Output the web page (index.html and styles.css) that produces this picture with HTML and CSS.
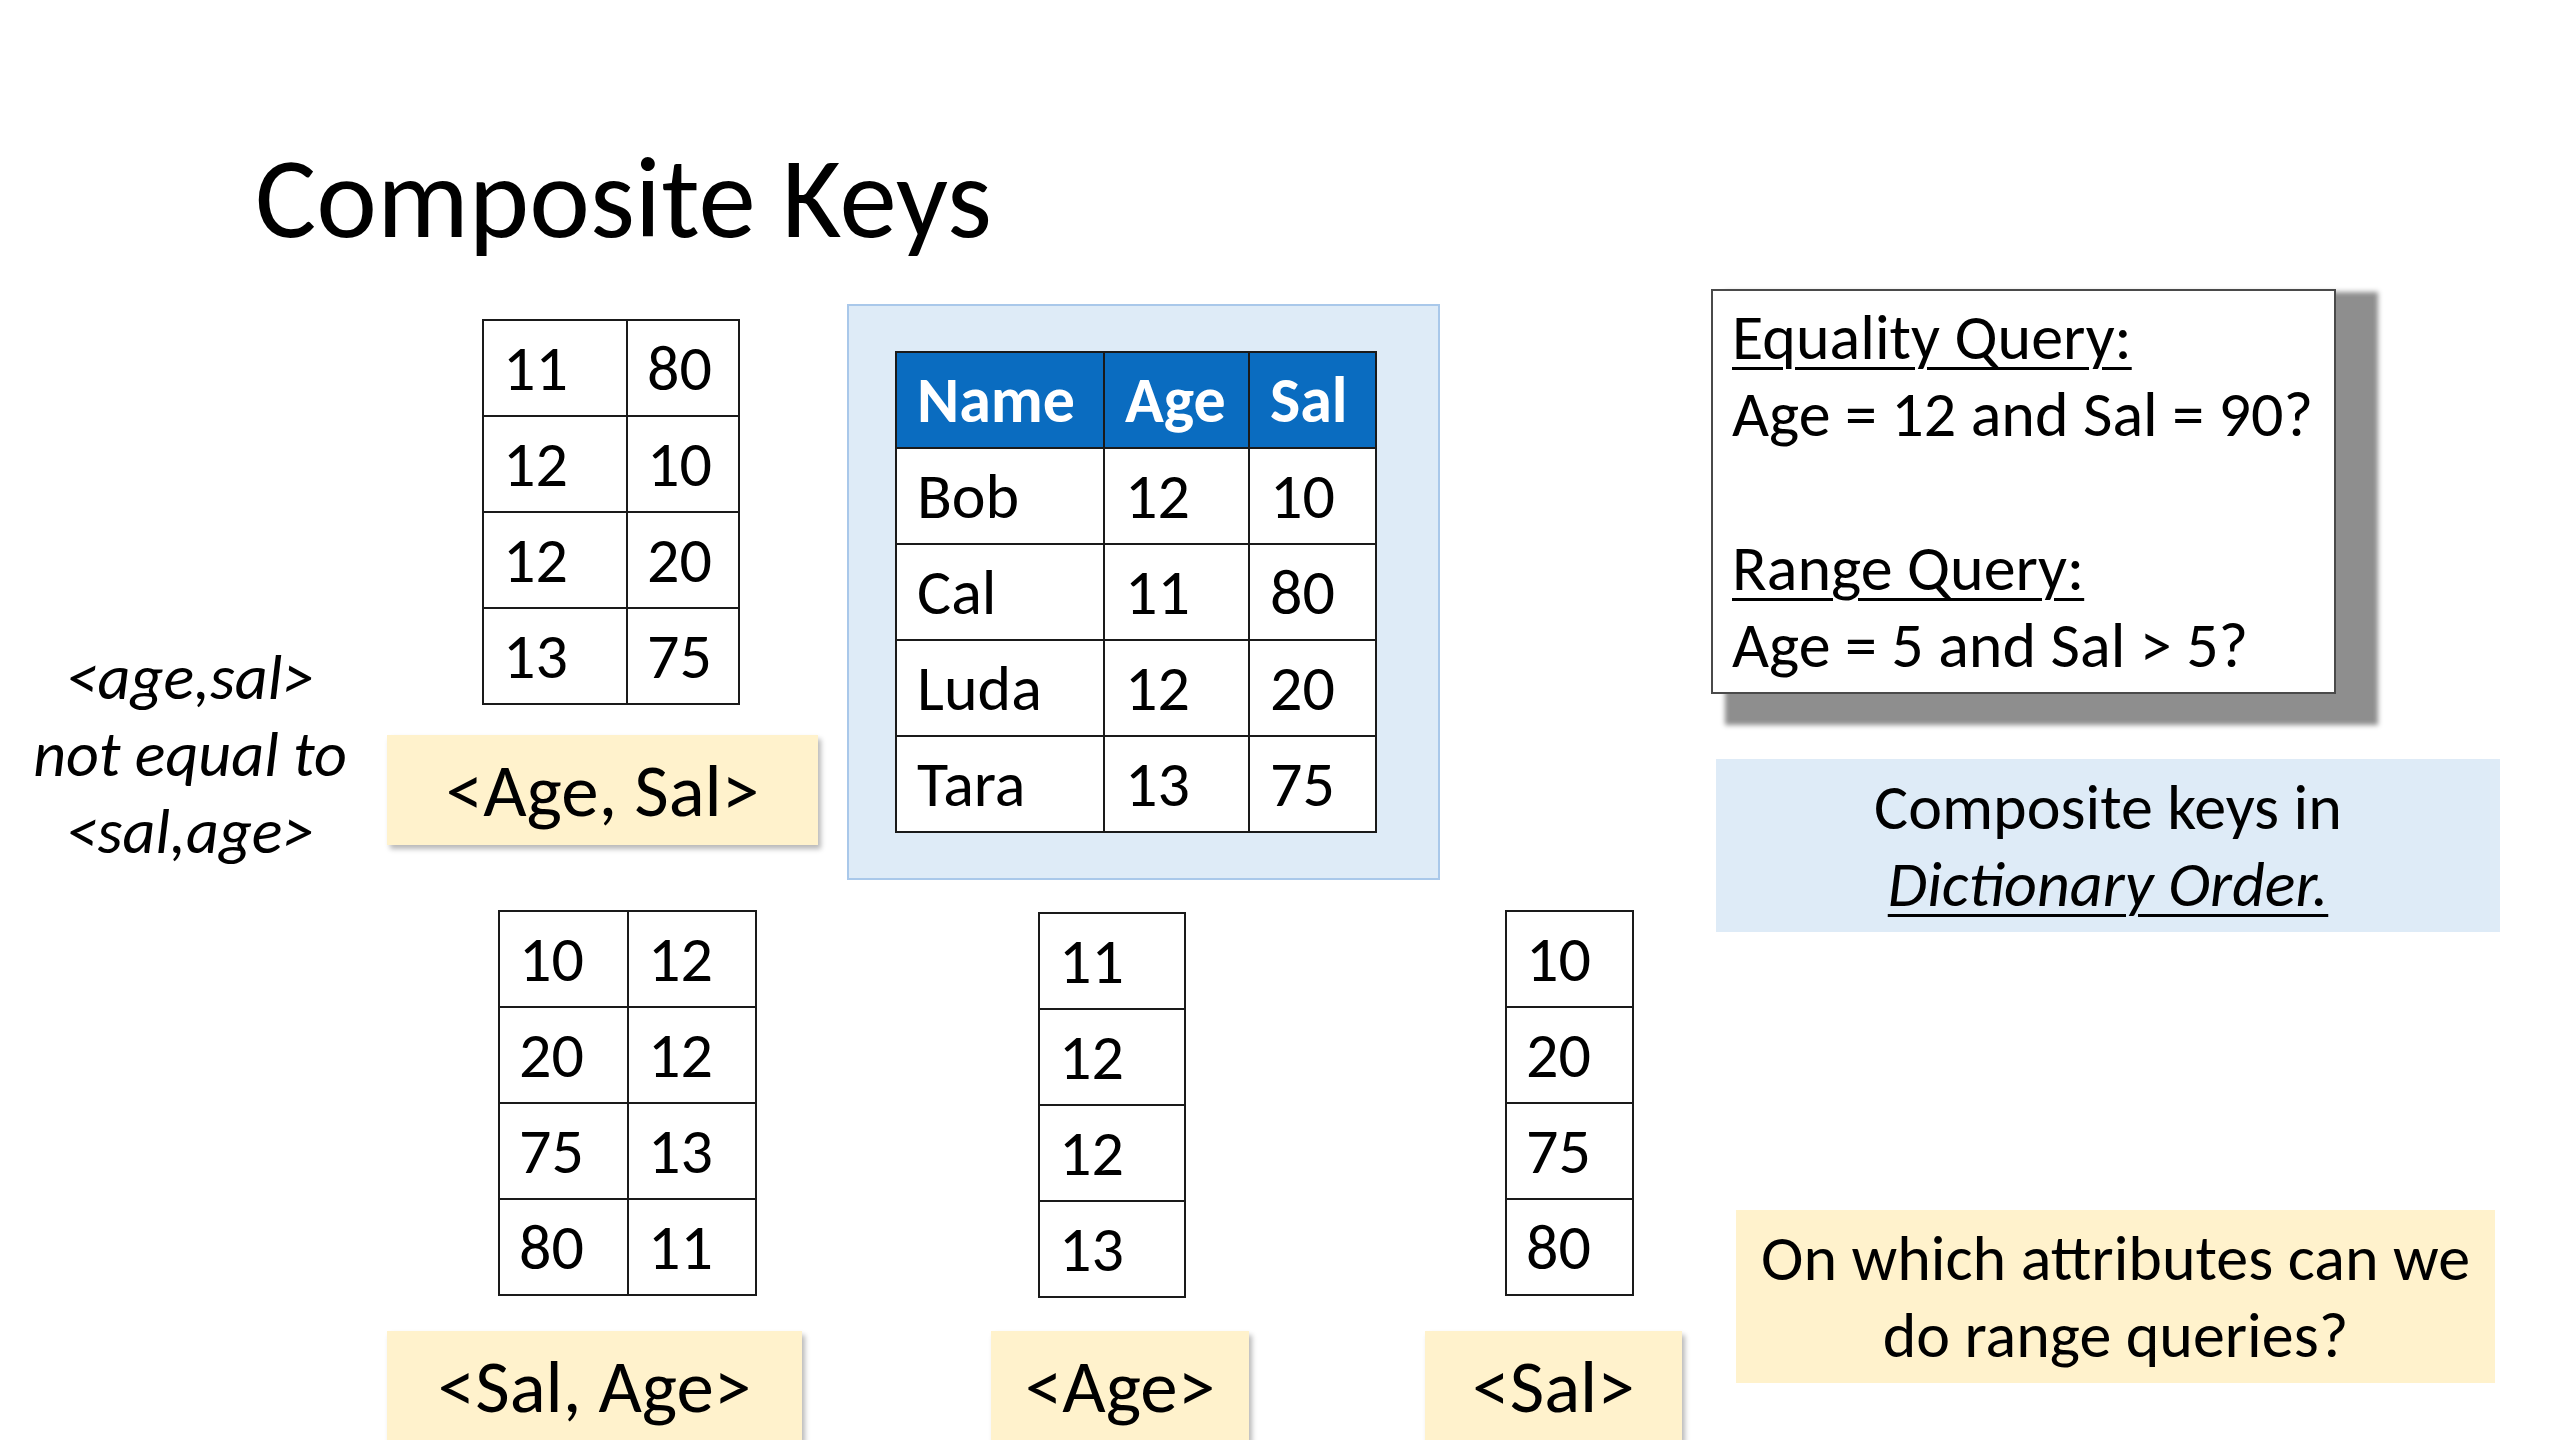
FILE: index.html
```html
<!DOCTYPE html>
<html lang="en">
<head>
<meta charset="utf-8">
<title>Composite Keys</title>
<link rel="stylesheet" href="styles.css">
</head>
<body>
<div class="slide">
  <h1 class="title">Composite Keys</h1>

  <div class="upper">
    <p class="note">&lt;age,sal&gt;<br>not equal to<br>&lt;sal,age&gt;</p>

    <div class="index index-agesal">
      <table class="grid grid-agesal">
        <tr><td>11</td><td>80</td></tr>
        <tr><td>12</td><td>10</td></tr>
        <tr><td>12</td><td>20</td></tr>
        <tr><td>13</td><td>75</td></tr>
      </table>
      <div class="label">&lt;Age, Sal&gt;</div>
    </div>

    <div class="source">
      <table class="grid people">
        <tr class="head"><th>Name</th><th>Age</th><th>Sal</th></tr>
        <tr><td>Bob</td><td>12</td><td>10</td></tr>
        <tr><td>Cal</td><td>11</td><td>80</td></tr>
        <tr><td>Luda</td><td>12</td><td>20</td></tr>
        <tr><td>Tara</td><td>13</td><td>75</td></tr>
      </table>
    </div>

    <div class="side">
      <div class="queries">
        <p><u>Equality Query:</u></p>
        <p>Age = 12 and Sal = 90?</p>
        <p class="blank">&nbsp;</p>
        <p><u>Range Query:</u></p>
        <p>Age = 5 and Sal &gt; 5?</p>
      </div>
      <div class="callout callout-blue">
        <p>Composite keys in</p>
        <p><u><i>Dictionary Order.</i></u></p>
      </div>
    </div>
  </div>

  <div class="lower">
    <div class="index index-salage">
      <table class="grid grid-salage">
        <tr><td>10</td><td>12</td></tr>
        <tr><td>20</td><td>12</td></tr>
        <tr><td>75</td><td>13</td></tr>
        <tr><td>80</td><td>11</td></tr>
      </table>
      <div class="label">&lt;Sal, Age&gt;</div>
    </div>

    <div class="index index-age">
      <table class="grid grid-age">
        <tr><td>11</td></tr>
        <tr><td>12</td></tr>
        <tr><td>12</td></tr>
        <tr><td>13</td></tr>
      </table>
      <div class="label">&lt;Age&gt;</div>
    </div>

    <div class="index index-sal">
      <table class="grid grid-sal">
        <tr><td>10</td></tr>
        <tr><td>20</td></tr>
        <tr><td>75</td></tr>
        <tr><td>80</td></tr>
      </table>
      <div class="label">&lt;Sal&gt;</div>
    </div>

    <div class="callout callout-yellow">
      <p>On which attributes can we</p>
      <p>do range queries?</p>
    </div>
  </div>
</div>
</body>
</html>
```

FILE: styles.css
```css
html, body {
  margin: 0;
  padding: 0;
  background: #ffffff;
}

.slide {
  width: 2560px;
  height: 1440px;
  overflow: hidden;
  background: #ffffff;
  color: #000000;
  font-family: Carlito, Calibri, Lato, "Liberation Sans", sans-serif;
  font-size: 64px;
}

p { margin: 0; }

.title {
  margin: 0;
  height: 289px;
  box-sizing: border-box;
  padding: 128px 0 0 255px;
  font-size: 115px;
  font-weight: 400;
  line-height: 140px;
}

/* ---------- upper band ---------- */
.upper {
  display: flex;
  align-items: flex-start;
  height: 591px;
}

.note {
  flex: none;
  width: 380px;
  margin-top: 350px;
  text-align: center;
  font-style: italic;
  line-height: 77px;
}

.index {
  flex: none;
  display: flex;
  flex-direction: column;
  align-items: flex-start;
}

.index-agesal { width: 431px; margin-left: 7px; margin-top: 30px; }
.index-agesal .grid { margin-left: 95px; }

.label {
  height: 110px;
  box-sizing: border-box;
  background: #fff2cc;
  box-shadow: 3px 4px 5px rgba(0, 0, 0, 0.28);
  display: flex;
  align-items: center;
  justify-content: center;
  font-size: 75px;
  line-height: 1;
}

/* tables */
.grid {
  border-collapse: collapse;
  background: #ffffff;
}
.grid td, .grid th {
  border: 2px solid #1a1a1a;
  height: 96px;
  padding: 0 0 0 19px;
  text-align: left;
  vertical-align: middle;
  font-size: 64px;
  line-height: 1;
  box-sizing: border-box;
}

.grid-agesal td:nth-child(1) { width: 144px; }
.grid-agesal td:nth-child(2) { width: 112px; }

.grid-salage td:nth-child(1) { width: 129px; }
.grid-salage td:nth-child(2) { width: 128px; }

.grid-age td { width: 146px; }
.grid-sal td { width: 127px; }

.source {
  flex: none;
  width: 593px;
  height: 576px;
  box-sizing: border-box;
  margin-left: 29px;
  margin-top: 15px;
  background: #deebf7;
  border: 2px solid #a9c8ea;
  padding: 45px 0 0 46px;
}

.people th, .people td { padding-left: 20px; }
.people th {
  background: #0a6cc0;
  color: #ffffff;
  font-weight: 700;
}
.people tr > :nth-child(1) { width: 208px; }
.people tr > :nth-child(2) { width: 145px; }
.people tr > :nth-child(3) { width: 127px; }

.side {
  flex: none;
  margin-left: 271px;
  width: 789px;
  display: flex;
  flex-direction: column;
  align-items: flex-start;
}

.queries {
  width: 625px;
  height: 405px;
  box-sizing: border-box;
  background: #ffffff;
  border: 2px solid #4a4a4a;
  box-shadow: 28px 17px 5px 14px #8e8e8e;
  padding: 8px 0 0 19px;
  line-height: 77px;
}
.queries u { text-decoration-thickness: 3px; text-underline-offset: 8px; }

.callout {
  display: flex;
  flex-direction: column;
  align-items: center;
  justify-content: center;
  box-sizing: border-box;
  text-align: center;
  line-height: 77px;
}
.callout u { text-decoration-thickness: 3px; text-underline-offset: 8px; }

.callout-blue {
  width: 784px;
  height: 173px;
  margin-left: 5px;
  margin-top: 65px;
  background: #deebf7;
}

/* ---------- lower band ---------- */
.lower {
  display: flex;
  align-items: flex-start;
  padding-top: 30px;
}

.index .label { margin-top: 35px; }
.index-agesal .label { width: 431px; margin-top: 30px; }

.index-salage { width: 415px; margin-left: 387px; }
.index-salage .grid { margin-left: 111px; }
.index-salage .label { width: 415px; }

.index-age { width: 258px; margin-left: 189px; }
.index-age .grid { margin-left: 47px; margin-top: 2px; }
.index-age .label { width: 258px; margin-top: 33px; }

.index-sal { width: 257px; margin-left: 176px; }
.index-sal .grid { margin-left: 80px; }
.index-sal .label { width: 257px; }

.callout-yellow {
  flex: none;
  width: 759px;
  height: 173px;
  margin-left: 54px;
  margin-top: 300px;
  background: #fff2cc;
}
```
